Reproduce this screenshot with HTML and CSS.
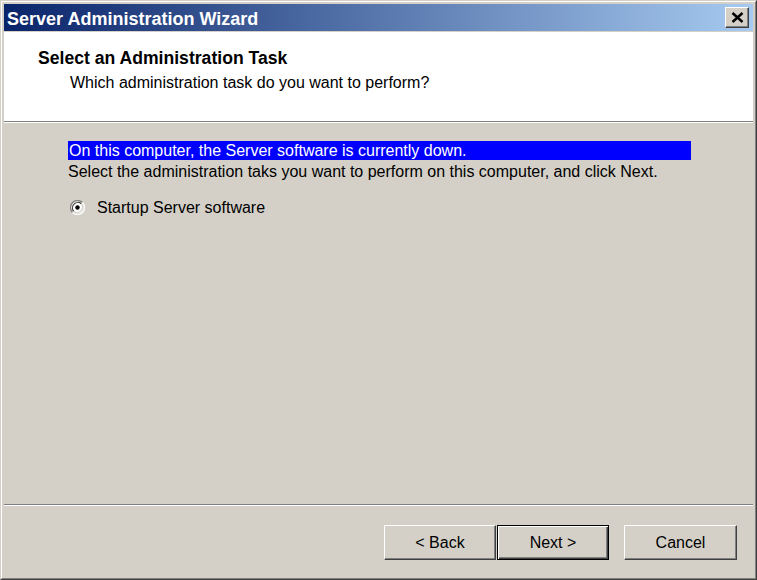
FILE: index.html
```html
<!DOCTYPE html>
<html>
<head>
<meta charset="utf-8">
<title>Server Administration Wizard</title>
<link rel="stylesheet" href="styles.css">
</head>
<body>
<div class="window">
  <div class="window-inner">
    <div class="titlebar">
      <span class="title">Server Administration Wizard</span>
      <div class="close-btn">
        <svg width="13" height="11" viewBox="0 0 13 11"><path d="M1.5 1 L11.5 10 M11.5 1 L1.5 10" stroke="#000" stroke-width="2.4" fill="none"/></svg>
      </div>
    </div>
    <div class="header">
      <div class="header-title">Select an Administration Task</div>
      <div class="header-sub">Which administration task do you want to perform?</div>
    </div>
    <div class="sep"></div>
    <div class="content">
      <div class="status"><span class="status-text">On this computer, the Server software is currently down.</span></div>
      <div class="instr">Select the administration taks you want to perform on this computer, and click Next.</div>
      <label class="radio-row">
        <svg class="radio" width="15" height="15" viewBox="0 0 15 15">
          <circle cx="7.5" cy="7.5" r="6" fill="#fff"/>
          <path d="M12.5 2.5 A7 7 0 0 0 2.5 12.5" stroke="#808080" stroke-width="1.2" fill="none"/>
          <path d="M11.3 3.7 A5.4 5.4 0 0 0 3.7 11.3" stroke="#404040" stroke-width="1.2" fill="none"/>
          <path d="M2.5 12.5 A7 7 0 0 0 12.5 2.5" stroke="#fff" stroke-width="1.2" fill="none"/>
          <path d="M3.7 11.3 A5.4 5.4 0 0 0 11.3 3.7" stroke="#d4d0c8" stroke-width="1.2" fill="none"/>
          <circle cx="7.5" cy="7.5" r="2.2" fill="#000"/>
        </svg>
        <span>Startup Server software</span>
      </label>
    </div>
    <div class="sep"></div>
    <div class="footer">
      <div class="btn">&lt; Back</div>
      <div class="btn btn-default">Next &gt;</div>
      <div class="btn btn-cancel">Cancel</div>
    </div>
  </div>
</div>
</body>
</html>
```

FILE: styles.css
```css
html, body {
  margin: 0;
  padding: 0;
  background: #d4d0c8;
}
body {
  font-family: "Liberation Sans", Arial, sans-serif;
  font-size: 16px;
  color: #000;
}
.window {
  width: 757px;
  height: 580px;
  box-sizing: border-box;
  border: 1px solid;
  border-color: #d4d0c8 #404040 #404040 #d4d0c8;
  background: #d4d0c8;
}
.window-inner {
  height: 100%;
  box-sizing: border-box;
  border: 1px solid;
  border-color: #fff #808080 #808080 #fff;
  padding: 2px;
  display: flex;
  flex-direction: column;
}
.titlebar {
  height: 27px;
  flex: none;
  background: linear-gradient(to right, #0a246a, #a6caf0);
  display: flex;
  align-items: flex-start;
  justify-content: space-between;
  margin-bottom: 1px;
}
.title {
  color: #fff;
  font-weight: bold;
  font-size: 18px;
  line-height: 20px;
  padding-left: 3px;
  padding-top: 5px;
  white-space: nowrap;
}
.close-btn {
  width: 24px;
  height: 21px;
  box-sizing: border-box;
  margin-top: 3px;
  margin-right: 4px;
  background: #d4d0c8;
  border: 1px solid;
  border-color: #fff #404040 #404040 #fff;
  box-shadow: inset -1px -1px #808080;
  display: flex;
  align-items: center;
  justify-content: center;
}
.close-btn svg {
  display: block;
  margin-left: 1px;
}
.header {
  height: 89px;
  flex: none;
  background: #fff;
  box-sizing: border-box;
  padding-top: 16px;
}
.header-title {
  font-weight: bold;
  font-size: 17.6px;
  line-height: 20px;
  padding-left: 34px;
}
.header-sub {
  padding-left: 66px;
  line-height: 19px;
  margin-top: 5px;
}
.sep {
  flex: none;
  height: 0;
  border-top: 1px solid #808080;
  border-bottom: 1px solid #fff;
}
.content {
  flex: 1;
  padding: 18px 0 0 64px;
}
.status {
  width: 623px;
  height: 19px;
  background: #0000ff;
  color: #fff;
  line-height: 19px;
  box-sizing: border-box;
  padding-left: 1px;
}
.instr {
  line-height: 19px;
  margin-top: 2px;
}
.radio-row {
  display: flex;
  align-items: center;
  margin-top: 17px;
  margin-left: 2px;
  height: 19px;
}
.radio {
  display: block;
  flex: none;
  margin-right: 12px;
}
.footer {
  flex: none;
  height: 70px;
  box-sizing: border-box;
  padding: 19px 16px 0 0;
  display: flex;
  justify-content: flex-end;
  align-items: flex-start;
}
.btn {
  width: 112px;
  height: 35px;
  box-sizing: border-box;
  border: 1px solid;
  border-color: #fff #404040 #404040 #fff;
  box-shadow: inset -1px -1px #808080;
  display: flex;
  align-items: center;
  justify-content: center;
  padding-bottom: 1px;
  line-height: 19px;
}
.btn-default {
  margin-left: 1px;
  border-color: #000;
  box-shadow: inset 1px 1px #fff, inset -1px -1px #404040, inset -2px -2px #808080;
}
.btn-cancel {
  width: 113px;
  margin-left: 15px;
}
```
